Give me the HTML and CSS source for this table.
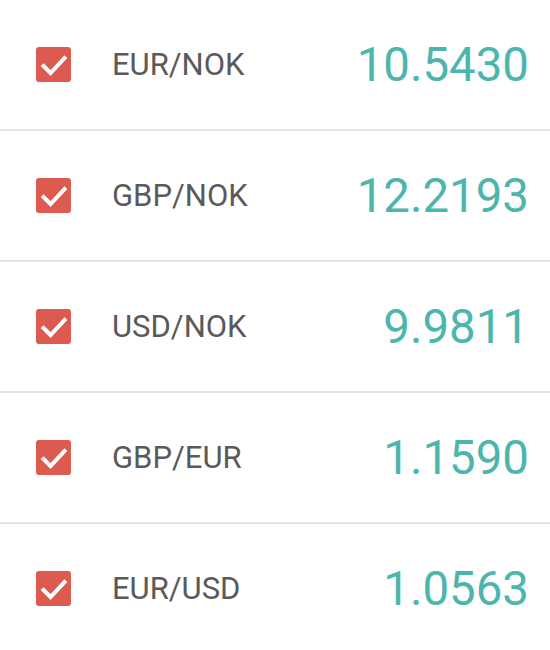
FILE: index.html
```html
<!DOCTYPE html>
<html>
<head>
<meta charset="utf-8">
<link rel="stylesheet" href="styles.css">
</head>
<body>
<ul class="list">
  <li class="row">
    <span class="check"><svg viewBox="0 0 35 35" width="35" height="35"><polyline points="7.5,19 14.5,26 28.5,11" fill="none" stroke="#fff" stroke-width="4" stroke-linecap="square"/></svg></span>
    <span class="pair">EUR/NOK</span>
    <span class="rate">10.5430</span>
  </li>
  <li class="row">
    <span class="check"><svg viewBox="0 0 35 35" width="35" height="35"><polyline points="7.5,19 14.5,26 28.5,11" fill="none" stroke="#fff" stroke-width="4" stroke-linecap="square"/></svg></span>
    <span class="pair">GBP/NOK</span>
    <span class="rate">12.2193</span>
  </li>
  <li class="row">
    <span class="check"><svg viewBox="0 0 35 35" width="35" height="35"><polyline points="7.5,19 14.5,26 28.5,11" fill="none" stroke="#fff" stroke-width="4" stroke-linecap="square"/></svg></span>
    <span class="pair">USD/NOK</span>
    <span class="rate">9.9811</span>
  </li>
  <li class="row">
    <span class="check"><svg viewBox="0 0 35 35" width="35" height="35"><polyline points="7.5,19 14.5,26 28.5,11" fill="none" stroke="#fff" stroke-width="4" stroke-linecap="square"/></svg></span>
    <span class="pair">GBP/EUR</span>
    <span class="rate">1.1590</span>
  </li>
  <li class="row">
    <span class="check"><svg viewBox="0 0 35 35" width="35" height="35"><polyline points="7.5,19 14.5,26 28.5,11" fill="none" stroke="#fff" stroke-width="4" stroke-linecap="square"/></svg></span>
    <span class="pair">EUR/USD</span>
    <span class="rate">1.0563</span>
  </li>
</ul>
</body>
</html>
```
FILE: styles.css
```css
html, body {
  margin: 0;
  padding: 0;
  background: #fff;
  font-family: Roboto, "Liberation Sans", sans-serif;
}
.list {
  list-style: none;
  margin: 0;
  padding: 0;
}
.row {
  display: flex;
  align-items: center;
  height: 129px;
  border-bottom: 2px solid #e4e4e4;
}
.check {
  width: 35px;
  height: 35px;
  margin-left: 36px;
  background: #dd5a50;
  border-radius: 3px;
  display: flex;
  flex-shrink: 0;
}
.pair {
  margin-left: 41px;
  font-size: 31px;
  color: #5a5a5a;
}
.rate {
  margin-left: auto;
  padding-right: 21px;
  font-size: 47.4px;
  color: #4db6ac;
}
```
